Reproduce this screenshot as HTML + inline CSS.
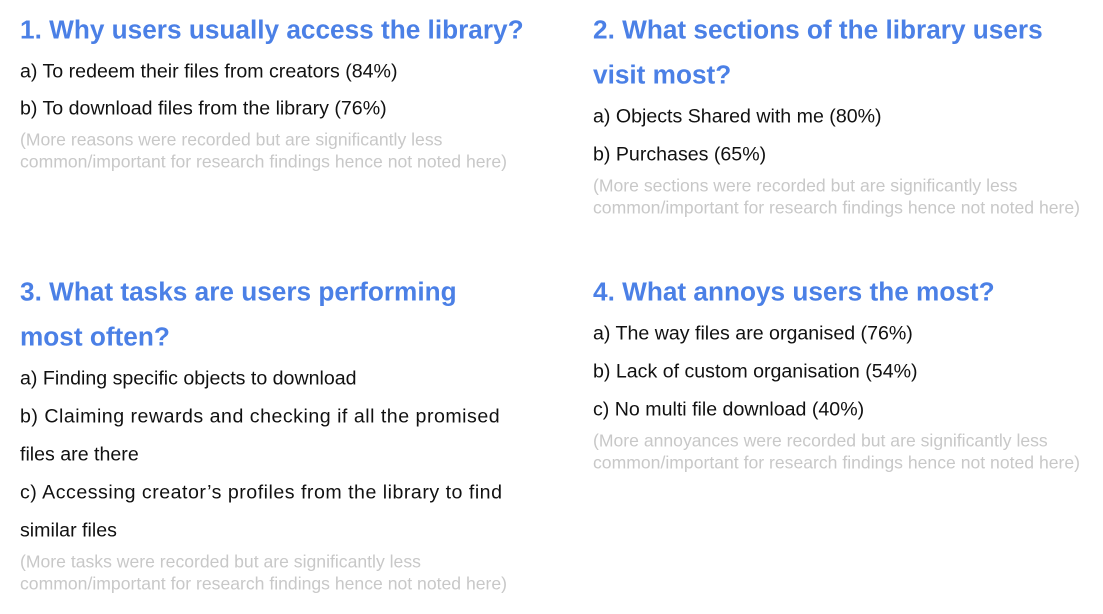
<!DOCTYPE html>
<html><head><style>
body{margin:0;width:1103px;height:614px;background:#fff;position:relative;overflow:hidden;font-family:"Liberation Sans",sans-serif}
.l{position:absolute;white-space:nowrap;transform:translateY(-50%)}
.h{color:#4b80e6;font-weight:bold;font-size:26.2px;letter-spacing:0px}
.b{color:#111;font-size:19.6px}
.n{color:#c8c8c8;font-size:17.6px}
</style></head><body>
<div class="l h" style="left:20px;top:30px">1. Why users usually access the library?</div>
<div class="l b" style="left:20px;top:72px">a) To redeem their files from creators (84%)</div>
<div class="l b" style="left:20px;top:109px">b) To download files from the library (76%)</div>
<div class="l n" style="left:20px;top:140px">(More reasons were recorded but are significantly less</div>
<div class="l n" style="left:20px;top:162px">common/important for research findings hence not noted here)</div>

<div class="l h" style="left:593px;top:30px">2. What sections of the library users</div>
<div class="l h" style="left:593px;top:75px">visit most?</div>
<div class="l b" style="left:593px;top:117px">a) Objects Shared with me (80%)</div>
<div class="l b" style="left:593px;top:155px">b) Purchases (65%)</div>
<div class="l n" style="left:593px;top:186px">(More sections were recorded but are significantly less</div>
<div class="l n" style="left:593px;top:208px">common/important for research findings hence not noted here)</div>

<div class="l h" style="left:20px;top:292px">3. What tasks are users performing</div>
<div class="l h" style="left:20px;top:337px">most often?</div>
<div class="l b" style="left:20px;top:379px">a) Finding specific objects to download</div>
<div class="l b" style="left:20px;top:417px;letter-spacing:0.5px">b) Claiming rewards and checking if all the promised</div>
<div class="l b" style="left:20px;top:455px">files are there</div>
<div class="l b" style="left:20px;top:493px;letter-spacing:0.5px">c) Accessing creator’s profiles from the library to find</div>
<div class="l b" style="left:20px;top:531px">similar files</div>
<div class="l n" style="left:20px;top:562px">(More tasks were recorded but are significantly less</div>
<div class="l n" style="left:20px;top:584px">common/important for research findings hence not noted here)</div>

<div class="l h" style="left:593px;top:292px">4. What annoys users the most?</div>
<div class="l b" style="left:593px;top:334px">a) The way files are organised (76%)</div>
<div class="l b" style="left:593px;top:372px">b) Lack of custom organisation (54%)</div>
<div class="l b" style="left:593px;top:410px">c) No multi file download (40%)</div>
<div class="l n" style="left:593px;top:441px">(More annoyances were recorded but are significantly less</div>
<div class="l n" style="left:593px;top:463px">common/important for research findings hence not noted here)</div>
</body></html>
